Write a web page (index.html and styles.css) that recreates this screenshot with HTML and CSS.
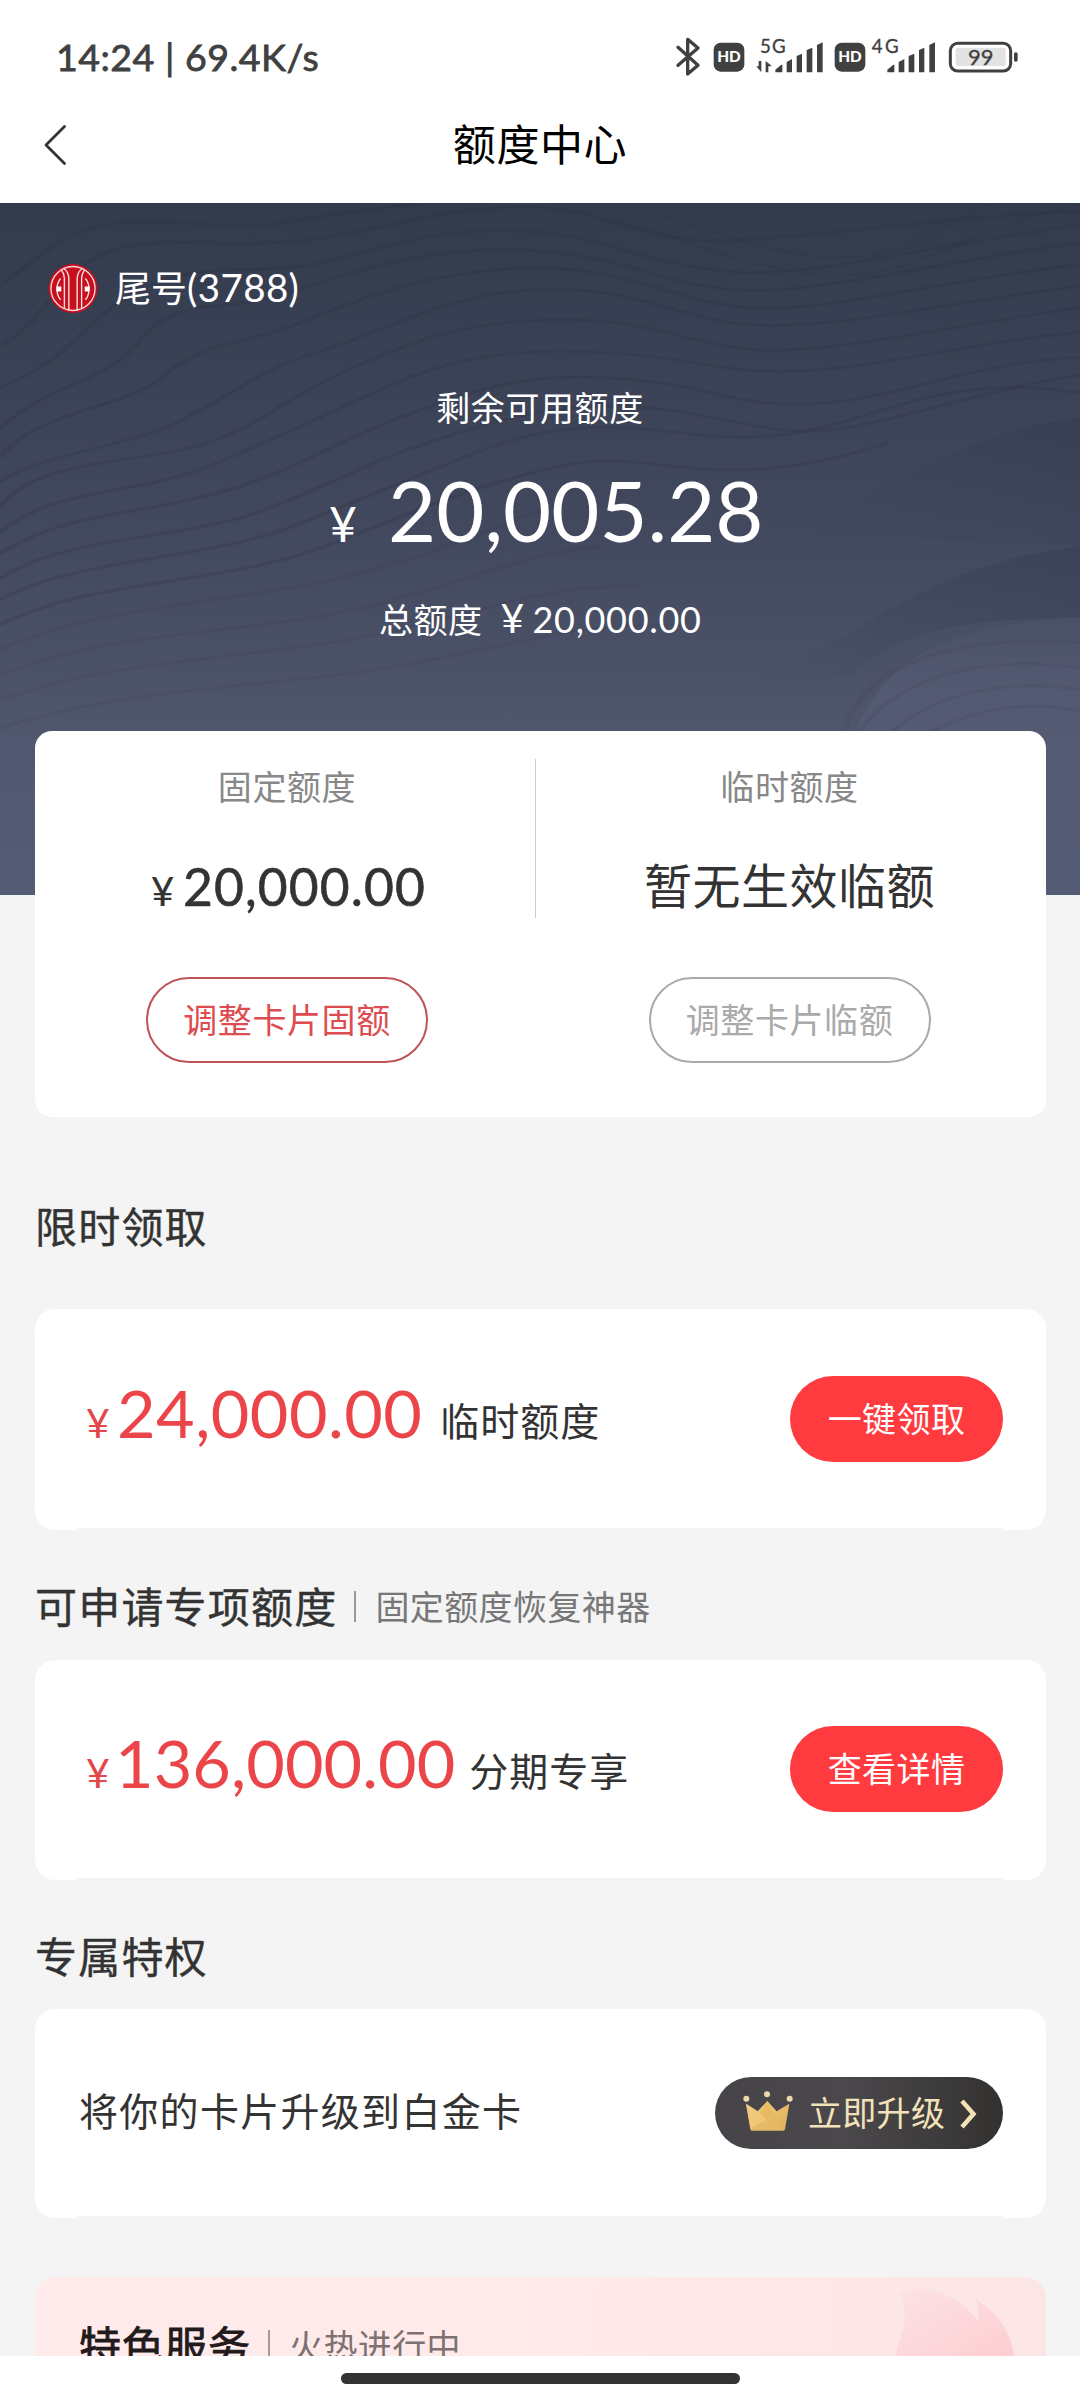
FILE: index.html
```html
<!DOCTYPE html>
<html lang="zh-CN">
<head>
<meta charset="utf-8">
<title>额度中心</title>
<link rel="stylesheet" href="styles.css">
</head>
<body>
<div class="screen">
  <header class="status-bar">
    <span class="status-time">14:24 | 69.4K/s</span>
    <svg class="status-icons" viewBox="0 0 1200 240" fill="#404040">
      <path d="M114 82L174 136L143 162V58L174 84L114 136" fill="none" stroke="#404040" stroke-width="10" stroke-linejoin="round" stroke-linecap="round"/>
      <rect x="221" y="68" width="92" height="87" rx="21"/>
      <text class="hd" x="267" y="127" text-anchor="middle">HD</text>
      <text class="net" x="360" y="98" textLength="77">5G</text>
      <path d="M364 123V157L349 139H356V123zM377 157V123L396 139H385V157z"/>
      <path d="M406 149L424 134H427V157H406zM440 126L456 117V157H440zM470 108L486 101V157H470zM500 90L517 83V157H500zM531 75L548 67V157H531z"/>
      <rect x="584" y="68" width="92" height="87" rx="21"/>
      <text class="hd" x="630" y="127" text-anchor="middle">HD</text>
      <text class="net" x="695" y="98" textLength="81">4G</text>
      <path d="M742 149L760 134H763V157H742zM776 126L793 117V157H776zM806 108L823 101V157H806zM837 90L853 83V157H837zM868 75L885 67V157H868z"/>
      <rect x="931" y="70" width="181" height="83" rx="22" fill="none" stroke="#404040" stroke-width="9"/>
      <rect x="947" y="83" width="150" height="55" rx="6" fill="#e2e2e2"/>
      <rect x="1122" y="97" width="11" height="28" rx="5"/>
      <text class="battery" x="1022" y="136" text-anchor="middle">99</text>
    </svg>
  </header>

  <nav class="title-bar">
    <svg class="back" viewBox="0 0 24 44"><path d="M21.500 3.500L3 22L21.500 40.500" fill="none" stroke="#333" stroke-width="2.800" stroke-linecap="round" stroke-linejoin="round"/></svg>
    <h1 class="page-title">额度中心</h1>
  </nav>

  <section class="hero">
    <svg class="waves" viewBox="0 8 1568 1938" preserveAspectRatio="none" aria-hidden="true">
      <defs>
        <linearGradient id="ridge" gradientUnits="userSpaceOnUse" x1="1568" y1="600" x2="1050" y2="1100">
          <stop offset="0" stop-color="#31384c" stop-opacity=".4"/>
          <stop offset="1" stop-color="#434a60" stop-opacity="0"/>
        </linearGradient>
        <linearGradient id="ridge-low" gradientUnits="userSpaceOnUse" x1="1568" y1="970" x2="1020" y2="1420">
          <stop offset="0" stop-color="#31384c" stop-opacity=".4"/>
          <stop offset=".5" stop-color="#363d52" stop-opacity=".22"/>
          <stop offset="1" stop-color="#4b5269" stop-opacity="0"/>
        </linearGradient>
        <linearGradient id="mound" x1="0" y1="0" x2="0" y2="1">
          <stop offset="0" stop-color="#596079" stop-opacity=".12"/>
          <stop offset=".3" stop-color="#596079" stop-opacity=".5"/>
          <stop offset="1" stop-color="#596079" stop-opacity="0"/>
        </linearGradient>
      </defs>
      <path d="M1568 610C1440 630 1330 760 1250 830S1110 900 1050 930L1568 970z" fill="url(#ridge)"/>
      <path d="M1568 970C1430 1000 1340 1090 1270 1170S1120 1330 1000 1400L1240 1330C1300 1210 1400 1170 1568 1170z" fill="url(#ridge-low)"/>
      <path d="M1225 1946C1195 1400 1290 1190 1568 1170V1946z" fill="url(#mound)"/>
      <g class="contours">
        <path d="M0 240C60 160 80 100 150 70S330 90 420 60S560 20 620 8"/>
        <path d="M0 410C70 330 80 210 150 150S330 140 450 110S620 30 740 20S900 90 1000 110S1280 60 1568 30"/>
        <path d="M0 525C110 440 110 350 200 255S380 220 480 170S640 80 750 85S940 180 1060 200S1330 130 1568 70"/>
        <path d="M0 640C80 500 150 520 205 390S330 320 420 260S620 130 760 140S950 230 1060 250S1340 180 1568 120"/>
        <path d="M0 720C60 580 180 590 240 490S350 410 440 340S640 190 780 190S970 280 1080 300S1350 230 1568 180"/>
        <path d="M0 790C70 700 180 700 270 610S370 480 470 420S660 250 800 250S990 340 1100 350S1370 290 1568 240"/>
        <path d="M0 860C50 720 210 740 300 680S400 570 500 480S690 330 830 335S1010 420 1120 420S1390 350 1568 300"/>
        <path d="M0 930C80 800 200 830 310 740S440 630 530 550S700 410 860 425S1030 480 1140 480S1400 400 1568 370"/>
        <path d="M0 990C90 870 230 880 350 800S470 690 580 610S760 480 900 500S1060 580 1180 570S1420 450 1568 440"/>
        <path d="M0 1060C90 940 270 950 380 870S540 730 620 680S800 560 930 580S1120 670 1220 640S1430 530 1568 490"/>
        <path d="M0 1120C110 1000 300 1010 430 910S620 760 700 700S860 620 980 650S1160 660 1260 600S1440 500 1568 540"/>
        <path d="M0 1190C130 1060 320 1080 470 970S650 830 760 770S900 730 1000 750S1190 740 1290 680"/>
      </g>
      <g class="contours faint">
        <path d="M0 1260C140 1130 360 1130 530 1040S720 900 820 850"/>
        <path d="M0 1330C160 1200 370 1220 550 1130S760 990 870 970"/>
        <path d="M0 1400C170 1280 370 1290 560 1210S790 1080 930 1080"/>
        <path d="M0 1480C180 1360 390 1370 590 1300S840 1180 1000 1190"/>
        <path d="M900 60C1000 110 1120 220 1230 210S1410 80 1568 10"/>
        <path d="M960 40C1060 100 1140 170 1240 160S1380 50 1440 8"/>
        <path d="M1225 1500C1240 1320 1370 1210 1568 1240"/>
        <path d="M1245 1500C1280 1380 1390 1260 1568 1310"/>
        <path d="M1290 1500C1330 1420 1420 1330 1568 1370"/>
        <path d="M1340 1500C1390 1450 1460 1390 1568 1430"/>
      </g>
    </svg>
    <div class="hero-content">
      <div class="account">
        <svg class="bank-logo" viewBox="0 0 144 148">
          <circle cx="72" cy="74" r="71" fill="#c80f1e"/>
          <circle cx="72" cy="74" r="64" fill="#c80f1e" stroke="#f6d5d6" stroke-width="4"/>
          <path d="M47 133V44C47 32 42 25 38 19M97 133V44C97 32 102 25 106 19M60 137V48C60 34 54 22 45 16M84 137V48C84 34 90 22 99 16" fill="none" stroke="#f9dfe0" stroke-width="4"/>
          <path d="M36 45C22 62 22 90 36 107M108 45C122 62 122 90 108 107" fill="none" stroke="#f9dfe0" stroke-width="4"/>
          <path d="M24 68H38V83H24zM106 68H120V83H106z" fill="#fff"/>
        </svg>
        <span class="account-name">尾号<span class="digits">(3788)</span></span>
      </div>
      <div class="available-label">剩余可用额度</div>
      <div class="available"><span class="available-yen">¥</span><span class="available-value">20,005.28</span></div>
      <div class="total"><span>总额度</span><span class="total-yen">¥</span><span class="total-value">20,000.00</span></div>
    </div>
  </section>

  <main class="content">
    <section class="summary">
      <div class="quota">
        <div class="quota-label">固定额度</div>
        <div class="quota-value money"><span class="yen">¥</span><span class="number">20,000.00</span></div>
        <button class="outline-btn danger">调整卡片固额</button>
      </div>
      <div class="quota">
        <div class="quota-label">临时额度</div>
        <div class="quota-value">暂无生效临额</div>
        <button class="outline-btn">调整卡片临额</button>
      </div>
    </section>

    <h2 class="heading first">限时领取</h2>
    <section class="offer">
      <div class="offer-text"><span class="yen">¥</span><span class="number">24,000.00</span><span class="offer-name">临时额度</span></div>
      <button class="solid-btn">一键领取</button>
    </section>

    <h2 class="heading">可申请专项额度<span class="sub">固定额度恢复神器</span></h2>
    <section class="offer second">
      <div class="offer-text"><span class="yen">¥</span><span class="number">136,000.00</span><span class="offer-name">分期专享</span></div>
      <button class="solid-btn">查看详情</button>
    </section>

    <h2 class="heading">专属特权</h2>
    <section class="upgrade">
      <span class="upgrade-text">将你的卡片升级到白金卡</span>
      <button class="upgrade-btn">
        <svg class="crown" viewBox="160 152 150 120">
          <defs><linearGradient id="gold" x1="0" y1="0" x2="1" y2="1"><stop offset="0" stop-color="#f0cf87"/><stop offset="1" stop-color="#dfae55"/></linearGradient></defs>
          <path d="M169 190L204 213L233 182L261 213L299 190L286 267Q285 271 281 271H187Q183 271 182 267z" fill="url(#gold)"/>
          <path d="M233 182L213 222L231 238L249 222z" fill="#e9bb5d"/>
          <path d="M231 238L184 268H284z" fill="#e6b968"/>
          <path d="M204 213L231 238L182 262L169 190z" fill="#f1cb7c" fill-opacity=".7"/>
          <g fill="#ead9ac"><circle cx="170" cy="175" r="9"/><circle cx="232" cy="162" r="9"/><circle cx="300" cy="175" r="9"/></g>
        </svg>
        <span>立即升级</span>
        <svg class="go" viewBox="0 0 18 30"><path d="M3 2L14.500 15L3 28" fill="none" stroke="#f3e2b5" stroke-width="4.500"/></svg>
      </button>
    </section>

    <section class="featured">
      <h2 class="featured-title">特色服务<span class="sub">火热进行中</span></h2>
      <svg class="flame" viewBox="1034 138 343 210" preserveAspectRatio="none">
        <defs><linearGradient id="fire" x1="0" y1="0" x2="1" y2="1"><stop offset="0" stop-color="#fce3e5"/><stop offset=".5" stop-color="#fdd8dc"/><stop offset="1" stop-color="#fdcdcf"/></linearGradient></defs>
        <path d="M1034 348C1040 295 1063 270 1059 220C1058 190 1052 170 1040 150C1140 120 1220 170 1272 239C1276 215 1274 195 1266 172C1335 220 1369 280 1377 348z" fill="url(#fire)"/>
      </svg>
    </section>
  </main>

  <footer class="gesture-area"><span class="gesture-bar"></span></footer>
</div>
</body>
</html>
```
FILE: styles.css
```css
* { box-sizing: border-box; }

body {
  margin: 0;
  background: #fff;
  color: #333;
  font-family: "Noto Sans CJK SC", sans-serif;
}

button {
  padding: 0;
  border: 0;
  background: none;
  font-family: inherit;
  white-space: nowrap;
}

h1, h2 { margin: 0; font-weight: 400; }

.screen {
  display: flex;
  flex-direction: column;
  width: 1080px;
  height: 2400px;
  overflow: hidden;
  background: #f4f4f4;
}

/* Status bar */
.status-bar {
  display: flex;
  justify-content: space-between;
  height: 84px;
  padding: 20px 40px 0 56px;
  background: #fff;
}
.status-time {
  color: #404040;
  font: 37.500px/74px Lato, sans-serif;
  letter-spacing: .5px;
  -webkit-text-stroke: .8px #404040;
}
.status-icons { width: 400px; height: 80px; flex: none; overflow: visible; }
.hd { font: 900 46px Lato, sans-serif; fill: #fff; }
.net { font: 56px Lato, sans-serif; stroke: #404040; stroke-width: 1px; }
.battery { font: 66px Lato, sans-serif; stroke: #404040; stroke-width: 1px; }

/* Title bar */
.title-bar {
  display: grid;
  grid-template-columns: 67px 1fr 67px;
  align-items: center;
  height: 119px;
  background: #fff;
}
.back { width: 24px; height: 44px; margin: 3px 0 0 43px; }
.page-title {
  padding-bottom: 3px;
  color: #000;
  font-size: 43px;
  line-height: 60px;
  letter-spacing: .6px;
  text-align: center;
}

/* Hero */
.hero {
  position: relative;
  flex: none;
  height: 692px;
  background: linear-gradient(#323a4c, #3c4357 28%, #43495e 50%, #50576e 78%, #555c76);
}
.waves { position: absolute; inset: 0; width: 100%; height: 100%; }
.contours { fill: none; stroke: #282f42; stroke-opacity: .2; stroke-width: 8; }
.contours.faint { stroke-opacity: .09; }
.hero-content { position: relative; padding-top: 57px; color: #fff; }
.account { display: flex; align-items: center; height: 56px; padding-left: 48px; gap: 17px; }
.bank-logo { flex: none; width: 50px; height: 51px; }
.account-name { padding-bottom: 4px; font-size: 36px; line-height: 52px; }
.digits { font-family: Lato, sans-serif; font-size: 38.500px; letter-spacing: .4px; }
.available-label {
  margin-top: 71px;
  font-size: 34px;
  line-height: 40px;
  letter-spacing: .6px;
  text-align: center;
}
.available {
  display: flex;
  align-items: baseline;
  margin-top: 33px;
  padding-left: 329px;
  font-family: Lato, sans-serif;
}
.available-yen { width: 59px; font-size: 48px; }
.available-value { font-size: 83px; line-height: 100px; }
.total {
  display: flex;
  align-items: baseline;
  margin-top: 38px;
  padding-left: 379px;
  font-size: 34px;
  line-height: 40px;
  letter-spacing: .5px;
}
.total-yen { margin-left: 18px; width: 32px; font: 41px/40px Lato, sans-serif; }
.total-value { font: 36px/40px Lato, sans-serif; letter-spacing: .7px; }

/* Cards */
.content { flex: none; height: 1625px; padding: 0 34px 0 35px; margin-top: -164px; position: relative; }
.summary {
  position: relative;
  display: grid;
  grid-template-columns: 504px 501px;
  height: 386px;
  padding-top: 35px;
  border-radius: 17px;
  background: #fff;
}
.summary::before {
  content: "";
  position: absolute;
  left: 500px;
  top: 28px;
  width: 1px;
  height: 159px;
  background: #ccc;
}
.quota { display: flex; flex-direction: column; align-items: center; }
.quota-label { color: #888; font-size: 34px; line-height: 40px; letter-spacing: .6px; }
.quota-value { height: 60px; margin-top: 47px; font-size: 48px; line-height: 60px; letter-spacing: .5px; }
.money { display: flex; align-items: baseline; padding-left: 3px; font-family: Lato, sans-serif; -webkit-text-stroke: .6px #333; }
.money .yen { width: 32px; font-size: 40px; -webkit-text-stroke: .2px #333; }
.money .number { padding-top: 3px; font-size: 51.500px; letter-spacing: 1.100px; }
.outline-btn {
  width: 282px;
  height: 86px;
  margin-top: 64px;
  padding-bottom: 4px;
  border: 2px solid #aaa;
  border-radius: 43px;
  color: #aaa;
  font-size: 34px;
  letter-spacing: .6px;
}
.outline-btn.danger { border-color: #c05458; color: #dc4c50; }

.heading {
  display: flex;
  align-items: center;
  height: 60px;
  margin: 45px 0 25px;
  font-size: 42px;
  line-height: 60px;
  letter-spacing: 1.200px;
  -webkit-text-stroke: .4px #333;
}
.heading.first { margin: 78px 0 54px; }
.sub {
  display: flex;
  align-items: center;
  margin-left: 17px;
  padding-top: 1px;
  color: #777;
  font-size: 34px;
  line-height: 60px;
  letter-spacing: .4px;
  -webkit-text-stroke: 0;
}
.sub::before { content: ""; width: 2px; height: 31px; margin: 2px 19px 0 0; background: #999; }

.offer, .upgrade {
  display: flex;
  align-items: flex-start;
  justify-content: space-between;
  height: 221px;
  padding: 67px 43px 0 51px;
  border-radius: 20px;
  background: linear-gradient(#f4f4f4, #f4f4f4) 42px 100% / 926px 2px no-repeat, #fff;
}
.offer.second { height: 220px; padding-top: 66px; }
.offer-text { display: flex; align-items: baseline; }
.offer .yen { width: 31px; color: #e34649; font: 41px/80px Lato, sans-serif; }
.offer .number { color: #eb4549; font: 66.500px/72px Lato, sans-serif; letter-spacing: .5px; }
.offer.second .yen { width: 29px; }
.offer.second .number { letter-spacing: .1px; }
.offer-name { position: relative; top: -2px; margin-left: 18px; font-size: 39px; line-height: 60px; letter-spacing: 1px; }
.offer.second .offer-name { margin-left: 14px; }
.solid-btn {
  width: 213px;
  height: 86px;
  padding-bottom: 4px;
  border-radius: 43px;
  background: #ff3b3f;
  color: #fff;
  font-size: 34px;
  letter-spacing: .4px;
}

.upgrade { height: 209px; margin-top: -1px; padding: 68px 43px 0 44px; }
.upgrade-text { padding-top: 2px; font-size: 39px; line-height: 60px; letter-spacing: 1.300px; }
.upgrade-btn {
  display: flex;
  align-items: center;
  width: 288px;
  height: 72px;
  padding-left: 28px;
  border-radius: 36px;
  background: linear-gradient(90deg, #464449, #4b484c 45%, #333230);
  color: #f3e2b9;
  font-size: 34px;
  line-height: 50px;
  letter-spacing: .3px;
}
.crown { width: 50px; height: 40px; margin: 0 15px 4px 0; }
.upgrade-btn span { padding-bottom: 3px; }
.go { width: 18px; height: 30px; margin: 2px 0 0 14px; }

.featured {
  position: relative;
  height: 79px;
  margin-top: 59px;
  padding: 37px 0 0 44px;
  border-radius: 22px 22px 0 0;
  overflow: hidden;
  background: linear-gradient(90deg, #ffebec, #ffe9e9 50%, #fce5e5);
}
.featured-title {
  display: flex;
  align-items: center;
  height: 60px;
  color: #221a1b;
  font-size: 42px;
  line-height: 60px;
  letter-spacing: 1px;
  -webkit-text-stroke: .8px #221a1b;
}
.featured-title .sub { color: #7d7172; }
.featured-title .sub::before { background: #a89a9b; }
.flame { position: absolute; left: 861px; top: 11px; width: 118px; height: 68px; }

/* Gesture navigation */
.gesture-area {
  display: flex;
  justify-content: center;
  flex: none;
  height: 44px;
  padding-top: 17px;
  background: #fff;
}
.gesture-bar { width: 399px; height: 11px; border-radius: 6px; background: #333; }
```
